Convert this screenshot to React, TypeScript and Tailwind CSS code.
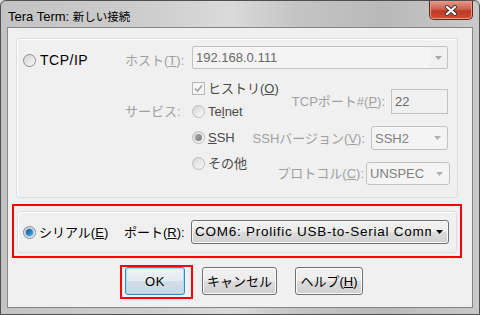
import React from "react";

function Arrow({ color }: { color: string }) {
  return (
    <svg width="7" height="4" viewBox="0 0 7 4" className="shrink-0">
      <path d="M0 0H7L3.5 4Z" fill={color} />
    </svg>
  );
}

function Radio({ kind }: { kind: "off" | "offLight" | "grayDot" | "blueDot" }) {
  const ring =
    kind === "off"
      ? "border-[#8e8f8f]"
      : kind === "blueDot"
      ? "border-[#7d8a96]"
      : "border-[#bcbcbc]";
  return (
    <span
      className={`inline-flex w-[13px] h-[13px] shrink-0 rounded-full border ${ring} bg-linear-to-br from-[#d4d4d4] to-[#fbfbfb] items-center justify-center`}
    >
      {kind === "grayDot" && (
        <span className="w-[7px] h-[7px] rounded-full bg-linear-to-br from-[#a8a8a8] to-[#7a7a7a]" />
      )}
      {kind === "blueDot" && (
        <span className="w-[7px] h-[7px] rounded-full bg-linear-to-br from-[#0d4a94] to-[#4fb6ec] shadow-[0_0_0_1px_#9ac6e6]" />
      )}
    </span>
  );
}

function CheckDisabled() {
  return (
    <span className="inline-flex w-[13px] h-[13px] shrink-0 border border-[#b7b7b7] bg-[#f4f4f4] items-center justify-center">
      <svg width="9" height="9" viewBox="0 0 9 9">
        <path d="M1 4.5L3.5 7L8 1.5" stroke="#a4a4a4" strokeWidth="1.6" fill="none" />
      </svg>
    </span>
  );
}

const btn =
  "h-[28px] flex items-center justify-center rounded-[3px] border border-[#707070] bg-[linear-gradient(#f2f2f2_0%,#ebebeb_50%,#dddddd_50%,#cfcfcf_100%)] shadow-[inset_0_0_0_1px_#fbfbfb] text-black";

export default function App() {
  return (
    <div className="w-[480px] h-[315px] overflow-hidden bg-[#d9d9d9] font-['Liberation_Sans','Noto_Sans_CJK_JP',sans-serif] text-[13px] leading-none text-black">
      <div className="w-full h-full flex flex-col rounded-t-[6px] border border-[#4f4f4f] bg-[linear-gradient(90deg,#c3c3c3_0%,#cdcdcd_30%,#dadada_48%,#c4c4c4_62%,#b9b9b9_80%,#c9c9c9_100%)]">
        {/* title bar */}
        <div className="h-[26px] flex items-start justify-between shrink-0">
          <div className="pl-[7px] pt-[9px] text-[13px] text-black whitespace-nowrap">
            Tera Term: <span className="text-[11.5px]">新しい接続</span>
          </div>
          <div className="mr-[6px] w-[44px] h-[19px] rounded-b-[5px] border border-t-0 border-[#5d2a20] bg-[linear-gradient(#e69a89_0%,#cf604b_45%,#bd3a22_55%,#d04f35_100%)] shadow-[inset_0_0_0_1px_#e8988a] flex items-center justify-center">
            <svg width="14" height="11" viewBox="0 0 14 11">
              <path d="M3 2L11 9M11 2L3 9" stroke="#3b3b3b" strokeWidth="4" strokeLinecap="round" />
              <path d="M3 2L11 9M11 2L3 9" stroke="#ffffff" strokeWidth="2.2" strokeLinecap="round" />
            </svg>
          </div>
        </div>

        {/* client */}
        <div className="mx-[6px] mb-[6px] flex-1 border border-[#868686] bg-[#f0f0f0] flex flex-col">
          {/* TCP/IP group */}
          <div className="ml-[8px] mt-[10px] w-[442px] h-[160px] shrink-0 border border-[#d5dfe5] rounded-[3px] shadow-[inset_1px_1px_0_#ffffff] flex flex-col">
            <div className="mt-[7px] ml-[6px] h-[23px] flex items-center">
              <div className="w-[102px] flex items-center pt-[5px]">
                <Radio kind="off" />
                <span className="ml-[4px] text-[14px] tracking-[0.5px]">TCP/IP</span>
              </div>
              <div className="w-[67px] pt-[5px] text-[#a0a0a0]">
                ホスト(<u className="underline-offset-1">T</u>):
              </div>
              <div className="w-[256px] h-[23px] border border-[#c2c2c2] rounded-[2px] bg-[#f4f4f4] flex items-center">
                <span className="flex-1 pl-[3px] text-[#6a6a6a]">192.168.0.111</span>
                <span className="w-[17px] h-full flex items-center justify-center bg-[#f0f0f0]">
                  <Arrow color="#a8a8a8" />
                </span>
              </div>
            </div>

            <div className="ml-[6px] flex">
              {/* left label column */}
              <div className="w-[169px] pl-[102px] pt-[31px]">
                <div className="h-[22px] flex items-center text-[#a0a0a0]">サービス:</div>
              </div>
              {/* middle column */}
              <div className="w-[56px] pt-[8px] flex flex-col text-[#4a4a4a]">
                <div className="h-[23px] flex items-center whitespace-nowrap">
                  <CheckDisabled />
                  <span className="ml-[3px]">
                    ヒストリ(<u>O</u>)
                  </span>
                </div>
                <div className="h-[22px] flex items-center">
                  <Radio kind="offLight" />
                  <span className="ml-[3px]">
                    Te<u>l</u>net
                  </span>
                </div>
                <div className="h-[30px] flex items-center">
                  <Radio kind="grayDot" />
                  <span className="ml-[3px]">
                    <u>S</u>SH
                  </span>
                </div>
                <div className="h-[22px] flex items-center whitespace-nowrap">
                  <Radio kind="offLight" />
                  <span className="ml-[3px]">その他</span>
                </div>
              </div>
              {/* right column */}
              <div className="w-[200px] pt-[20px] flex flex-col items-end text-[#a0a0a0]">
                <div className="h-[25px] flex items-center">
                  <span className="mr-[6px] whitespace-nowrap">
                    TCPポート#(<u>P</u>):
                  </span>
                  <div className="w-[57px] h-[25px] border border-[#c2c2c2] bg-[#f0f0f0] flex items-center pl-[3px] text-[#6a6a6a]">
                    22
                  </div>
                </div>
                <div className="mt-[12px] h-[24px] flex items-center">
                  <span className="mr-[6px] whitespace-nowrap">
                    SSHバージョン(<u>V</u>):
                  </span>
                  <div className="w-[77px] h-[24px] border border-[#c2c2c2] rounded-[3px] bg-[#f4f4f4] flex items-center justify-between pl-[3px] pr-[6px] text-[#808080]">
                    <span>SSH2</span>
                    <Arrow color="#b0b0b0" />
                  </div>
                </div>
                <div className="mt-[12px] h-[23px] flex items-center -mr-[2px]">
                  <span className="mr-[2px] whitespace-nowrap">
                    プロトコル(<u>C</u>):
                  </span>
                  <div className="w-[84px] h-[23px] border border-[#c2c2c2] rounded-[3px] bg-[#f4f4f4] flex items-center justify-between pl-[3px] pr-[6px] text-[#808080]">
                    <span>UNSPEC</span>
                    <Arrow color="#b0b0b0" />
                  </div>
                </div>
              </div>
            </div>
          </div>

          {/* Serial (red highlight) */}
          <div className="ml-[4px] mt-[6px] w-[450px] h-[54px] shrink-0 border-2 border-[#ff0000] pt-[5px] pl-[3px]">
            <div className="w-[440px] h-[42px] border border-[#d5dfe5] rounded-[3px] shadow-[inset_1px_1px_0_#ffffff] flex items-center pl-[5px]">
              <div className="w-[101px] flex items-center">
                <Radio kind="blueDot" />
                <span className="ml-[3px] whitespace-nowrap">
                  シリアル(<u>E</u>)
                </span>
              </div>
              <div className="w-[67px] whitespace-nowrap">
                ポート(<u>R</u>):
              </div>
              <div className="w-[258px] h-[24px] rounded-[3px] border border-[#707070] bg-[linear-gradient(#f2f2f2_0%,#ebebeb_50%,#dddddd_50%,#cfcfcf_100%)] shadow-[inset_0_0_0_1px_#fbfbfb] flex items-center">
                <span className="flex-1 overflow-hidden whitespace-nowrap pl-[3px] text-[13.5px] tracking-[0.75px]">
                  COM6: Prolific USB-to-Serial Comm Port
                </span>
                <span className="w-[17px] flex items-center justify-center">
                  <Arrow color="#000000" />
                </span>
              </div>
            </div>
          </div>

          {/* buttons */}
          <div className="ml-[112px] mt-[7px] flex items-start">
            <div className="w-[73px] h-[34px] border-2 border-[#ff0000] pl-[3px]">
              <div className="w-[60px] h-[28px] flex items-center justify-center rounded-[3px] border border-[#3c8ac0] bg-[linear-gradient(#eef3f6_0%,#e3ebf0_50%,#d3dfe7_50%,#c9d6df_100%)] shadow-[inset_0_0_0_1px_#9fe1fb] text-black tracking-[0.5px]">
                OK
              </div>
            </div>
            <div className={`${btn} ml-[9px] mt-[2px] w-[75px]`}>キャンセル</div>
            <div className={`${btn} ml-[18px] mt-[2px] w-[68px]`}>
              ヘルプ(<u>H</u>)
            </div>
          </div>
        </div>
      </div>
    </div>
  );
}
